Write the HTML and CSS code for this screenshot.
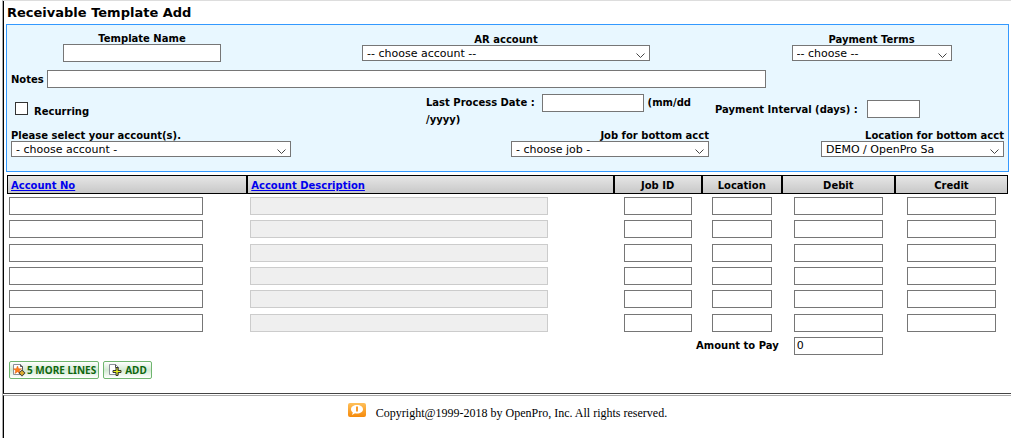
FILE: index.html
```html
<!DOCTYPE html>
<html lang="en">
<head>
    <meta charset="UTF-8">
    <meta name="viewport" content="width=device-width, initial-scale=1.0">
    <title>Receivable Template Add</title>
    <link rel="stylesheet" href="styles.css">
</head>
<body>
<div class="page">
    <form class="template-form">
        <h1>Receivable Template Add</h1>

        <div class="panel">
            <div class="top-row">
                <div class="field">
                    <label for="template_name">Template Name</label>
                    <input type="text" id="template_name" class="w-name">
                </div>
                <div class="field">
                    <label for="ar_account">AR account</label>
                    <select id="ar_account" class="w-ar"><option>-- choose account --</option></select>
                </div>
                <div class="field">
                    <label for="terms">Payment Terms</label>
                    <select id="terms" class="w-terms"><option>-- choose --</option></select>
                </div>
            </div>

            <div class="notes-row">
                <label for="notes">Notes</label>
                <input type="text" id="notes">
            </div>

            <div class="recur-row">
                <div class="recurring">
                    <input type="checkbox" id="recurring">
                    <label for="recurring">Recurring</label>
                </div>
                <div class="process-date">
                    <label for="last_date">Last Process Date :</label>
                    <input type="text" id="last_date">
                    (mm/dd<br>/yyyy)
                </div>
                <div class="interval">
                    <label for="interval">Payment Interval (days) :</label>
                    <input type="text" id="interval">
                </div>
            </div>

            <div class="account-row">
                <div class="field">
                    <label for="account">Please select your account(s).</label>
                    <select id="account" class="w-account"><option>- choose account -</option></select>
                </div>
                <div class="field">
                    <label for="job">Job for bottom acct</label>
                    <select id="job" class="w-job"><option>- choose job -</option></select>
                </div>
                <div class="field">
                    <label for="location">Location for bottom acct</label>
                    <select id="location" class="w-location"><option>DEMO / OpenPro Sa</option></select>
                </div>
            </div>
        </div>

        <table class="lines">
            <thead>
                <tr>
                    <th class="account"><a href="#">Account No</a></th>
                    <th class="desc"><a href="#">Account Description</a></th>
                    <th class="job">Job ID</th>
                    <th class="loc">Location</th>
                    <th class="amount">Debit</th>
                    <th class="amount">Credit</th>
                </tr>
            </thead>
            <tbody>
                <tr>
                    <td class="account"><input type="text" aria-label="Account No"></td>
                    <td class="desc"><input type="text" aria-label="Account Description" disabled></td>
                    <td class="job"><input type="text" aria-label="Job ID"></td>
                    <td class="loc"><input type="text" aria-label="Location"></td>
                    <td class="amount"><input type="text" aria-label="Debit"></td>
                    <td class="amount"><input type="text" aria-label="Credit"></td>
                </tr>
                <tr>
                    <td class="account"><input type="text" aria-label="Account No"></td>
                    <td class="desc"><input type="text" aria-label="Account Description" disabled></td>
                    <td class="job"><input type="text" aria-label="Job ID"></td>
                    <td class="loc"><input type="text" aria-label="Location"></td>
                    <td class="amount"><input type="text" aria-label="Debit"></td>
                    <td class="amount"><input type="text" aria-label="Credit"></td>
                </tr>
                <tr>
                    <td class="account"><input type="text" aria-label="Account No"></td>
                    <td class="desc"><input type="text" aria-label="Account Description" disabled></td>
                    <td class="job"><input type="text" aria-label="Job ID"></td>
                    <td class="loc"><input type="text" aria-label="Location"></td>
                    <td class="amount"><input type="text" aria-label="Debit"></td>
                    <td class="amount"><input type="text" aria-label="Credit"></td>
                </tr>
                <tr>
                    <td class="account"><input type="text" aria-label="Account No"></td>
                    <td class="desc"><input type="text" aria-label="Account Description" disabled></td>
                    <td class="job"><input type="text" aria-label="Job ID"></td>
                    <td class="loc"><input type="text" aria-label="Location"></td>
                    <td class="amount"><input type="text" aria-label="Debit"></td>
                    <td class="amount"><input type="text" aria-label="Credit"></td>
                </tr>
                <tr>
                    <td class="account"><input type="text" aria-label="Account No"></td>
                    <td class="desc"><input type="text" aria-label="Account Description" disabled></td>
                    <td class="job"><input type="text" aria-label="Job ID"></td>
                    <td class="loc"><input type="text" aria-label="Location"></td>
                    <td class="amount"><input type="text" aria-label="Debit"></td>
                    <td class="amount"><input type="text" aria-label="Credit"></td>
                </tr>
                <tr>
                    <td class="account"><input type="text" aria-label="Account No"></td>
                    <td class="desc"><input type="text" aria-label="Account Description" disabled></td>
                    <td class="job"><input type="text" aria-label="Job ID"></td>
                    <td class="loc"><input type="text" aria-label="Location"></td>
                    <td class="amount"><input type="text" aria-label="Debit"></td>
                    <td class="amount"><input type="text" aria-label="Credit"></td>
                </tr>
                <tr>
                    <td class="total" colspan="4"><label for="total">Amount to Pay</label></td>
                    <td class="amount"><input type="text" id="total" value="0"></td>
                    <td></td>
                </tr>
            </tbody>
        </table>

        <div class="buttons">
            <button type="button">
                <svg width="14" height="14" viewBox="0 0 14 14">
                    <path d="M1.500 1.500h7l2 2v8h-9z" fill="#fff" stroke="#8a8f98"/>
                    <path d="M8.500 1.500v2h2v3" fill="none" stroke="#555"/>
                    <path d="M5.500 3l1.100 2.800h2.900L7.300 7.700l.8 2.800-2.600-1.700-2.600 1.700.8-2.800L1.500 5.800h2.900z" fill="#ff7d1a" stroke="#e0600c" stroke-width=".5"/>
                    <path d="M10 6.500l3.500 3.500-3.500 3.500L6.500 10z" fill="#333"/>
                    <path d="M9.500 8h1v1.500H12v1h-1.500V12h-1v-1.500H8v-1h1.500z" fill="#f8c030" stroke="#f8c030" stroke-width=".5"/>
                </svg>
                5 MORE LINES
            </button>
            <button type="button" class="add">
                <svg width="14" height="14" viewBox="0 0 14 14">
                    <path d="M1.500 1.500h6l3 3v7h-9z" fill="#fff" stroke="#8a8f98"/>
                    <path d="M7.500 1.500v3h3" fill="none" stroke="#555"/>
                    <path d="M8 4.500h2v3h3v2h-3v3H8v-3H5v-2h3z" fill="#e6f020" stroke="#333"/>
                </svg>
                ADD
            </button>
        </div>
    </form>

    <footer>
        <svg width="18" height="14" viewBox="0 0 18 14">
            <defs>
                <linearGradient id="orange" x1="0" y1="0" x2="0" y2="1">
                    <stop offset="0" stop-color="#ffc05a"/>
                    <stop offset="1" stop-color="#f58a0b"/>
                </linearGradient>
            </defs>
            <rect width="18" height="14" rx="2" fill="url(#orange)"/>
            <path d="M9 2c3.500 0 6 1.800 6 4.300S12.500 10.500 9 10.500c-.7 0-1.400 0-2-.2L4 12l.8-2.500C3.600 8.700 3 7.600 3 6.300 3 3.800 5.500 2 9 2z" fill="#fff"/>
            <path d="M8 3.500h2v5H8z" fill="#f79a2a"/>
        </svg>
        <span>Copyright@1999-2018 by OpenPro, Inc. All rights reserved.</span>
    </footer>
</div>
</body>
</html>
```

FILE: styles.css
```css
* {
    box-sizing: border-box;
}
body {
    margin: 0;
    padding-left: 2px;
    background: white;
    color: black;
    font-family: Verdana, "DejaVu Sans", sans-serif;
    font-size: 10px;
}
.page {
    display: flex;
    flex-direction: column;
    min-height: 100vh;
    border-top: 1px solid #ddd;
    border-left: 1px solid #aaa;
}
.template-form {
    padding: 4px 2px 14px;
    border-left: 1px solid black;
    border-bottom: 1px solid #444;
}
h1 {
    margin: 0 0 3px;
    padding-left: 1px;
    font-size: 13px;
    line-height: 16px;
}
label {
    font-weight: bold;
    white-space: nowrap;
}
input, select {
    margin: 0;
    border: 1px solid #767676;
    border-radius: 0;
    background-color: white;
    color: black;
    font-family: inherit;
    font-size: 11px;
}
input[type=text] {
    height: 18px;
    padding: 1px 2px;
}
input:disabled {
    border-color: #ccc;
    background-color: #efefef;
}
select {
    appearance: none;
    height: 16px;
    padding: 0 16px 0 4px;
    background-image: url("data:image/svg+xml,%3Csvg xmlns='http://www.w3.org/2000/svg' width='9' height='6'%3E%3Cpath d='M.5 .5l4 4 4-4' fill='none' stroke='%23444'/%3E%3C/svg%3E");
    background-repeat: no-repeat;
    background-position: right 4px top 7px;
}

/* blue panel */
.panel {
    padding: 8px 4px 14px;
    border: 1px solid #3399ff;
    background: #e8f7ff;
}
.field {
    display: flex;
    flex-direction: column;
    align-items: center;
}
.field label {
    line-height: 11px;
}
.top-row {
    display: grid;
    grid-template-columns: 262fr 466fr 265fr;
    align-items: center;
}
.notes-row {
    display: flex;
    align-items: center;
    gap: 3px;
    margin-top: 8px;
}
#notes {
    width: 72.4%;
}
.recur-row {
    display: grid;
    grid-template-columns: 415fr 289fr 289fr;
    margin-top: 6px;
}
.recurring {
    display: flex;
    gap: 6px;
    padding: 8px 4px 0;
}
.recurring label {
    padding-top: 4px;
}
input[type=checkbox] {
    appearance: none;
    width: 13px;
    height: 13px;
    border-color: #333;
}
.process-date {
    font-weight: bold;
    line-height: 15px;
    white-space: nowrap;
}
.process-date input {
    width: 102px;
    margin-left: 4px;
    vertical-align: middle;
}
.interval {
    display: flex;
    align-items: center;
    gap: 9px;
    height: 30px;
}
.interval input {
    width: 53px;
}
.account-row {
    display: grid;
    grid-template-columns: 280fr 418fr 295fr;
    margin-top: 3px;
}
.account-row .field {
    align-items: flex-end;
}
.account-row .field:first-child {
    align-items: flex-start;
}
.w-name { width: 158px; }
.w-ar { width: 288px; }
.w-terms { width: 160px; }
.w-account { width: 280px; }
.w-job { width: 198px; }
.w-location { width: 183px; }

/* account lines */
.lines {
    width: calc(100% - 2px);
    margin: 3px 1px 0;
    table-layout: fixed;
    border-collapse: separate;
    border-spacing: 0;
}
th {
    height: 19px;
    padding: 1px 3px 0;
    border: 1px solid black;
    background: linear-gradient(#e6e6e6, #c8c8c8);
    text-align: center;
}
th a {
    color: #0000ee;
}
th.account { width: 24%; }
th.desc { width: 36.6%; }
th.job { width: 8.8%; }
th.loc { width: 8%; }
th.amount { width: 11.3%; }
td {
    height: 23px;
    padding: 0;
    text-align: center;
}
tbody tr:nth-child(3n+2) td {
    height: 24px;
}
td input {
    display: block;
    margin: 0 auto;
}
th.account, th.desc {
    text-align: left;
}
td.account input {
    width: 194px;
    margin-left: 2px;
}
td.desc input {
    width: 298px;
    margin-left: 3px;
}
td.job input { width: 68px; }
td.loc input { width: 60px; }
td.amount input { width: 89px; }
td.total {
    padding-right: 3px;
    text-align: right;
}

.buttons {
    display: flex;
    gap: 4px;
    margin: 4px 3px 0;
}
button {
    display: flex;
    align-items: center;
    gap: 1px;
    height: 18px;
    padding: 0 2px;
    border: 1px solid #6fb56f;
    border-radius: 2px;
    background: linear-gradient(#fff, #d2ead2 50%, #fff);
    color: #0f660f;
    font-family: "Noto Sans", sans-serif;
    font-size: 10px;
    font-weight: bold;
    white-space: nowrap;
}
button.add {
    gap: 3px;
    padding: 0 4px;
}

footer {
    display: flex;
    flex: 1;
    align-items: baseline;
    justify-content: center;
    gap: 10px;
    margin-top: 1px;
    padding: 7px 0 18px;
    border-top: 1px solid #aaa;
    border-left: 1px solid black;
    font-family: "Liberation Serif", serif;
    font-size: 12px;
}
```
